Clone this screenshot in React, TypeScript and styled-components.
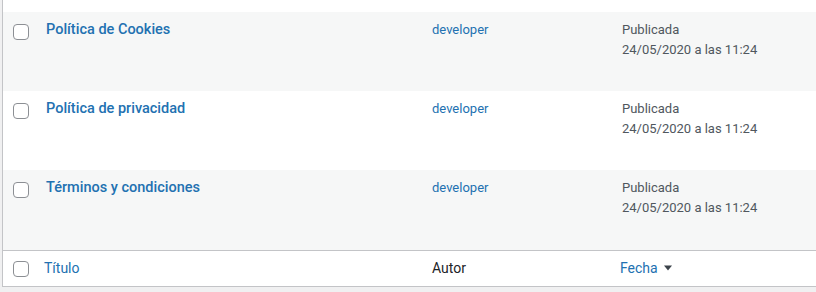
import React, { FC } from 'react';
import styled, { createGlobalStyle } from 'styled-components';

const GlobalStyle = createGlobalStyle`
  html, body {
    margin: 0;
    padding: 0;
    background: #f0f0f1;
    overflow: hidden;
  }
  body {
    font-family: Roboto, 'Liberation Sans', sans-serif;
    color: #3c434a;
  }
`;

const Table = styled.div`
  margin-left: 2px;
  width: 900px;
  border-left: 1px solid #c3c4c7;
  border-bottom: 1px solid #c3c4c7;
  background: #fff;
`;

const RowTail = styled.div`
  height: 12px;
  background: #fff;
`;

const Row = styled.div<{ $alt?: boolean; $height: number }>`
  display: grid;
  grid-template-columns: 33px 386px 190px 1fr;
  height: ${(p) => p.$height}px;
  background: ${(p) => (p.$alt ? '#f6f7f7' : '#fff')};
`;

const FootRow = styled.div`
  display: grid;
  grid-template-columns: 33px 386px 190px 1fr;
  height: 36px;
  box-sizing: border-box;
  padding-bottom: 2px;
  border-top: 1px solid #c3c4c7;
  background: #fff;
  align-items: center;
`;

const CheckCell = styled.div<{ $top: number }>`
  padding: ${(p) => p.$top}px 0 0 10px;
`;

const Box = styled.span`
  display: block;
  width: 14px;
  height: 14px;
  border: 1px solid #8c8f94;
  border-radius: 4px;
  background: #fff;
`;

const Cell = styled.div`
  padding: 8px 10px;
  font-size: 13px;
  line-height: 19.5px;
`;

const TitleLink = styled.a`
  display: block;
  font-size: 14.5px;
  font-weight: 500;
  line-height: 20px;
  color: #2271b1;
  text-decoration: none;
`;

const AuthorLink = styled.a`
  color: #2271b1;
  text-decoration: none;
`;

const DateText = styled.div`
  color: #50575e;
  line-height: 19.5px;
`;

const HeadCell = styled.div<{ $link?: boolean; $shift?: number }>`
  padding: 0 10px 0 ${(p) => p.$shift ?? 10}px;
  font-size: 14px;
  line-height: 20px;
  color: ${(p) => (p.$link ? '#2271b1' : '#1d2327')};
  display: flex;
  align-items: center;
  gap: 6px;
`;

const SortArrow: FC = () => (
  <svg width="8" height="6" viewBox="0 0 8 6">
    <path d="M0 0.5 H8 L4 5.5 Z" fill="#3c434a" />
  </svg>
);

interface Page {
  title: string;
  alt: boolean;
  height: number;
}

const pages: Page[] = [
  { title: 'Política de Cookies', alt: true, height: 79 },
  { title: 'Política de privacidad', alt: false, height: 79 },
  { title: 'Términos y condiciones', alt: true, height: 80 },
];

const App: FC = () => (
  <>
    <GlobalStyle />
    <Table>
      <RowTail />
      {pages.map((page) => (
        <Row key={page.title} $alt={page.alt} $height={page.height}>
          <CheckCell $top={12}>
            <Box />
          </CheckCell>
          <Cell>
            <TitleLink href="#">{page.title}</TitleLink>
          </Cell>
          <Cell>
            <AuthorLink href="#">developer</AuthorLink>
          </Cell>
          <Cell>
            <DateText>Publicada</DateText>
            <DateText>24/05/2020 a las 11:24</DateText>
          </Cell>
        </Row>
      ))}
      <FootRow>
        <CheckCell $top={2}>
          <Box />
        </CheckCell>
        <HeadCell $link $shift={8}>Título</HeadCell>
        <HeadCell>Autor</HeadCell>
        <HeadCell $link $shift={8}>
          Fecha <SortArrow />
        </HeadCell>
      </FootRow>
    </Table>
  </>
);

export default App;
